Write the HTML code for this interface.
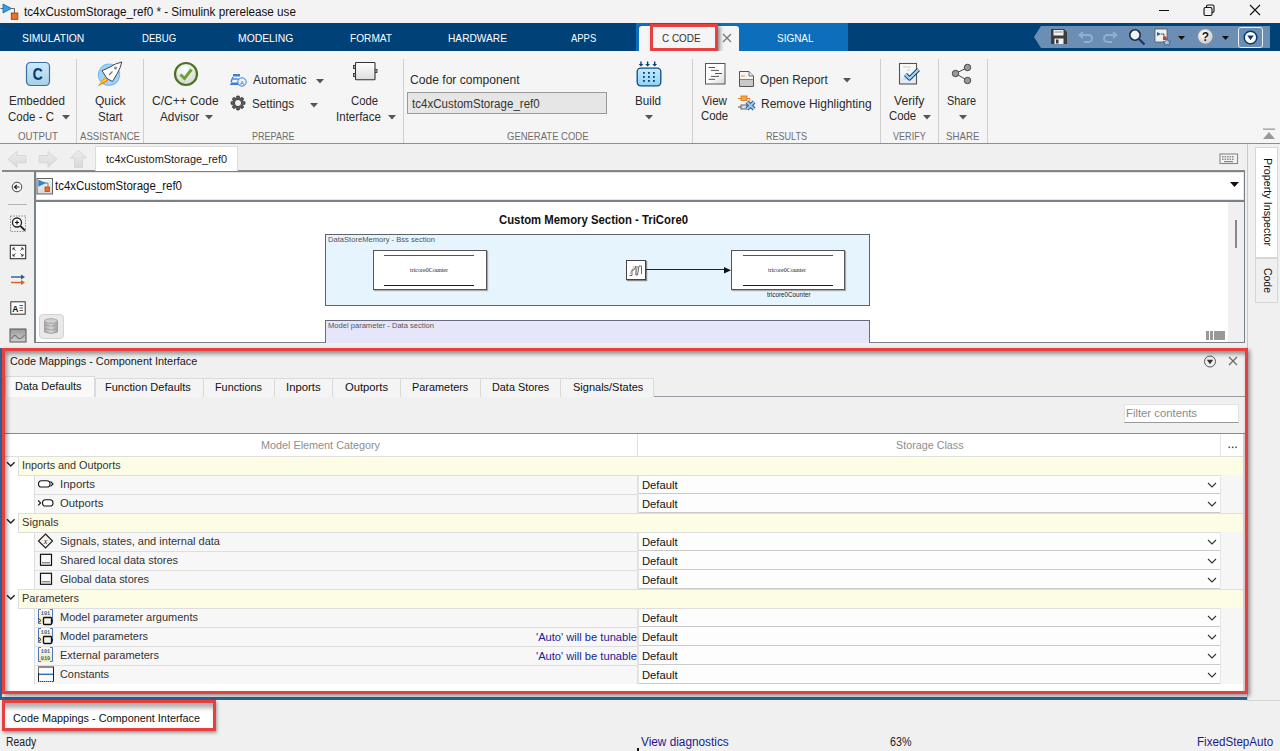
<!DOCTYPE html>
<html><head><meta charset="utf-8">
<style>
*{box-sizing:border-box;margin:0;padding:0}
html,body{width:1280px;height:751px;overflow:hidden;background:#f0f0f0;font-family:"Liberation Sans",sans-serif;color:#222;position:relative}
.a{position:absolute;display:block}
.t{position:absolute;white-space:nowrap;line-height:1}
svg.a{overflow:visible}
</style></head><body>
<div class="a" style="left:0px;top:0px;width:1280px;height:23px;background:#f3f3f3;"></div>
<svg class="a" style="left:0px;top:1px;" width="20" height="20" viewBox="0 0 20 20"><path d="M11.5 7.5H14.5V12" stroke="#555" stroke-width="0.9" fill="none"/><path d="M0.5 7.5H3" stroke="#555" stroke-width="0.9"/><path d="M3 3L11.5 7.5L3 12Z" fill="#3a9be6" stroke="#1b64a8" stroke-width="0.8"/><rect x="11.3" y="12" width="6.5" height="6.3" fill="#e8742a" stroke="#a23b10" stroke-width="0.9"/></svg>
<div class="t" style="left:24.00px;top:5.85px;font-size:12.3px;color:#111;transform:scaleX(0.9495);transform-origin:0 0;">tc4xCustomStorage_ref0 * - Simulink prerelease use</div>
<div class="a" style="left:1159px;top:10px;width:10px;height:1px;background:#111;"></div>
<svg class="a" style="left:1202px;top:3px;" width="14" height="14" viewBox="0 0 14 14"><rect x="2" y="4.5" width="8" height="8" rx="1.5" fill="none" stroke="#111" stroke-width="1.1"/><path d="M4.5 4.5V3.5Q4.5 2 6 2H10.5Q12 2 12 3.5V8Q12 9.5 10.5 9.5H10" fill="none" stroke="#111" stroke-width="1.1"/></svg>
<svg class="a" style="left:1248px;top:3px;" width="14" height="14" viewBox="0 0 14 14"><path d="M2 2L12 12M12 2L2 12" stroke="#111" stroke-width="1.1"/></svg>
<div class="a" style="left:0px;top:23px;width:1280px;height:28px;background:#004178;"></div>
<div class="a" style="left:636px;top:23px;width:212px;height:28px;background:#0d6ebc;"></div>
<svg class="a" style="left:639px;top:26px;" width="100" height="25" viewBox="0 0 100 25"><path d="M0 25V3Q0 0 3 0H97Q100 0 100 3V25Z" fill="#f5f5f5"/></svg>
<div class="t" style="left:21.80px;top:32.85px;font-size:11px;color:#ffffff;transform:scaleX(0.9380);transform-origin:0 0;">SIMULATION</div>
<div class="t" style="left:142.00px;top:32.85px;font-size:11px;color:#ffffff;transform:scaleX(0.8743);transform-origin:0 0;">DEBUG</div>
<div class="t" style="left:237.50px;top:32.85px;font-size:11px;color:#ffffff;transform:scaleX(0.9425);transform-origin:0 0;">MODELING</div>
<div class="t" style="left:350.00px;top:32.85px;font-size:11px;color:#ffffff;transform:scaleX(0.9206);transform-origin:0 0;">FORMAT</div>
<div class="t" style="left:448.00px;top:32.85px;font-size:11px;color:#ffffff;transform:scaleX(0.9253);transform-origin:0 0;">HARDWARE</div>
<div class="t" style="left:570.60px;top:32.85px;font-size:11px;color:#ffffff;transform:scaleX(0.8586);transform-origin:0 0;">APPS</div>
<div class="t" style="left:776.80px;top:32.85px;font-size:11px;color:#ffffff;transform:scaleX(0.9046);transform-origin:0 0;">SIGNAL</div>
<div class="t" style="left:661.50px;top:32.85px;font-size:11px;color:#333333;transform:scaleX(0.8999);transform-origin:0 0;">C CODE</div>
<svg class="a" style="left:722px;top:33px;" width="10" height="10" viewBox="0 0 10 10"><path d="M1 1L9 9M9 1L1 9" stroke="#777" stroke-width="1.3"/></svg>
<div class="a" style="left:650px;top:24px;width:68px;height:27px;background:none;border:3px solid #e8403f;box-shadow:2px 2px 4px rgba(0,0,0,0.45);"></div>
<svg class="a" style="left:1034px;top:26px;" width="236" height="22" viewBox="0 0 236 22"><path d="M0 11L7 0H236V22H7Z" fill="#6b8fb4"/></svg>
<svg class="a" style="left:1050px;top:28px;" width="18" height="17" viewBox="0 0 18 17"><path d="M1 1H14L17 4V16H1Z" fill="#3c3c3c"/><rect x="3.5" y="2" width="10" height="5.5" fill="#f0f0f0"/><rect x="4.5" y="3.5" width="8" height="1" fill="#888"/><rect x="4.5" y="10.5" width="9" height="5.5" fill="#f0f0f0"/><rect x="6" y="11.5" width="2.5" height="4" fill="#3c3c3c"/></svg>
<svg class="a" style="left:1078px;top:30px;" width="16" height="14" viewBox="0 0 16 14"><path d="M5 2L1.5 5L5 8M2 5H10Q14 5 14 8.5Q14 12 10 12H6" fill="none" stroke="#8fb0cf" stroke-width="1.8"/></svg>
<svg class="a" style="left:1102px;top:30px;" width="16" height="14" viewBox="0 0 16 14"><path d="M11 2L14.5 5L11 8M14 5H6Q2 5 2 8.5Q2 12 6 12H10" fill="none" stroke="#8fb0cf" stroke-width="1.8"/></svg>
<svg class="a" style="left:1128px;top:28px;" width="18" height="18" viewBox="0 0 18 18"><circle cx="7" cy="7" r="5.2" fill="#eef3f8" stroke="#1b2a3a" stroke-width="1.6"/><path d="M11 11L16.5 16.5" stroke="#1b3c66" stroke-width="2.4"/></svg>
<svg class="a" style="left:1154px;top:28px;" width="18" height="18" viewBox="0 0 18 18"><rect x="1" y="1" width="12" height="13" fill="#f0f0f0" stroke="#555" stroke-width="0.8"/><path d="M3 4L7 6L3 8Z" fill="#1b64a8"/><path d="M7 6H10V9" stroke="#333" stroke-width="0.8" fill="none"/><rect x="9" y="8.5" width="3.5" height="3.5" fill="#d43a2a"/><path d="M13 10.5L14.2 13.2L17 13.4L14.9 15.2L15.6 17.8L13 16.3L10.4 17.8L11.1 15.2L9 13.4L11.8 13.2Z" fill="#a9c8e6" stroke="#2d5a88" stroke-width="0.7"/></svg>
<svg class="a" style="left:1177.5px;top:35.5px;" width="7" height="4" viewBox="0 0 7 4"><path d="M0 0H7L3.5 4Z" fill="#111"/></svg>
<svg class="a" style="left:1197px;top:28px;" width="17" height="17" viewBox="0 0 17 17"><defs><radialGradient id="hg" cx="40%" cy="35%" r="70%"><stop offset="0" stop-color="#fff"/><stop offset="1" stop-color="#c9c9c9"/></radialGradient></defs><circle cx="8.3" cy="8.5" r="7.6" fill="url(#hg)" stroke="#888" stroke-width="0.6"/><text x="8.3" y="13" font-family="Liberation Sans" font-weight="bold" font-size="12" text-anchor="middle" fill="#1a1a1a">?</text></svg>
<svg class="a" style="left:1221.5px;top:35.5px;" width="7" height="4" viewBox="0 0 7 4"><path d="M0 0H7L3.5 4Z" fill="#111"/></svg>
<div class="a" style="left:1238px;top:26.5px;width:25px;height:21px;background:none;border:1px solid #e8eef5;border-radius:3px;"></div>
<svg class="a" style="left:1243px;top:30px;" width="15" height="15" viewBox="0 0 15 15"><circle cx="7.5" cy="7.5" r="6.3" fill="#fff" stroke="#0a3a6e" stroke-width="1.6"/><path d="M4.3 5.6H10.7L7.5 10.2Z" fill="#0a3a6e"/></svg>
<div class="a" style="left:0px;top:51px;width:1280px;height:92px;background:#f5f5f5;"></div>
<div class="a" style="left:0px;top:143px;width:1280px;height:1px;background:#8e8e8e;"></div>
<div class="a" style="left:76px;top:59px;width:1px;height:84px;background:#cfcfcf;"></div>
<div class="a" style="left:143px;top:59px;width:1px;height:84px;background:#cfcfcf;"></div>
<div class="a" style="left:403px;top:59px;width:1px;height:84px;background:#cfcfcf;"></div>
<div class="a" style="left:692px;top:59px;width:1px;height:84px;background:#cfcfcf;"></div>
<div class="a" style="left:880px;top:59px;width:1px;height:84px;background:#cfcfcf;"></div>
<div class="a" style="left:938px;top:59px;width:1px;height:84px;background:#cfcfcf;"></div>
<div class="a" style="left:987px;top:59px;width:1px;height:84px;background:#cfcfcf;"></div>
<div class="t" style="left:17.80px;top:130.65px;font-size:11px;color:#6e6e6e;transform:scaleX(0.8846);transform-origin:0 0;">OUTPUT</div>
<div class="t" style="left:79.70px;top:130.65px;font-size:11px;color:#6e6e6e;transform:scaleX(0.8712);transform-origin:0 0;">ASSISTANCE</div>
<div class="t" style="left:252.40px;top:130.65px;font-size:11px;color:#6e6e6e;transform:scaleX(0.8211);transform-origin:0 0;">PREPARE</div>
<div class="t" style="left:507.00px;top:130.65px;font-size:11px;color:#6e6e6e;transform:scaleX(0.8621);transform-origin:0 0;">GENERATE CODE</div>
<div class="t" style="left:766.00px;top:130.65px;font-size:11px;color:#6e6e6e;transform:scaleX(0.8213);transform-origin:0 0;">RESULTS</div>
<div class="t" style="left:892.70px;top:130.65px;font-size:11px;color:#6e6e6e;transform:scaleX(0.8255);transform-origin:0 0;">VERIFY</div>
<div class="t" style="left:946.00px;top:130.65px;font-size:11px;color:#6e6e6e;transform:scaleX(0.8813);transform-origin:0 0;">SHARE</div>
<svg class="a" style="left:25px;top:61px;" width="26" height="26" viewBox="0 0 26 26"><defs><linearGradient id="cg" x1="0" y1="0" x2="0" y2="1"><stop offset="0" stop-color="#cdeafa"/><stop offset="1" stop-color="#a6cfe6"/></linearGradient></defs><rect x="1.5" y="1.5" width="23" height="23" rx="4" fill="url(#cg)" stroke="#3e6f9c" stroke-width="1.2"/><path d="M16.6 10.3Q15.6 8.2 13.2 8.2Q9.3 8.2 9.3 13Q9.3 17.8 13.2 17.8Q15.7 17.8 16.7 15.6" fill="none" stroke="#0b3c6e" stroke-width="2.2"/></svg>
<div class="t" style="left:9.40px;top:94.60px;font-size:12px;color:#2b2b2b;transform:scaleX(0.9648);transform-origin:0 0;">Embedded</div>
<div class="t" style="left:8.40px;top:110.80px;font-size:12px;color:#2b2b2b;transform:scaleX(0.9580);transform-origin:0 0;">Code - C</div>
<svg class="a" style="left:61.5px;top:115px;" width="8" height="4.5" viewBox="0 0 8 4.5"><path d="M0 0H8L4.0 4.5Z" fill="#555"/></svg>
<svg class="a" style="left:95px;top:60px;" width="30" height="28" viewBox="0 0 30 28"><circle cx="14" cy="14.8" r="10.6" fill="#9fd3fa" stroke="#7cc0f6" stroke-width="1.2"/><path d="M2.5 26.5L9.5 17.5L13.5 20.5Z" fill="#ff7a00"/><path d="M4.5 24L10 18.5L12 20Z" fill="#ffe000"/><path d="M26.8 2Q20 3.5 15 7L7 10.8L12 18.5L17.5 21.5L22.5 13Q25.5 8 26.8 2Z" fill="#ffffff" stroke="#333" stroke-width="0.9" stroke-linejoin="round"/><circle cx="20.5" cy="8" r="1.5" fill="#888"/><path d="M14 15L17.5 11.5" stroke="#777" stroke-width="1.2"/></svg>
<div class="t" style="left:94.70px;top:94.60px;font-size:12px;color:#2b2b2b;transform:scaleX(0.9976);transform-origin:0 0;">Quick</div>
<div class="t" style="left:97.50px;top:110.80px;font-size:12px;color:#2b2b2b;transform:scaleX(0.9668);transform-origin:0 0;">Start</div>
<svg class="a" style="left:173px;top:61px;" width="26" height="26" viewBox="0 0 26 26"><defs><radialGradient id="kg" cx="45%" cy="30%" r="75%"><stop offset="0" stop-color="#ffffff"/><stop offset="1" stop-color="#cfcfcf"/></radialGradient></defs><circle cx="13" cy="13" r="11" fill="url(#kg)" stroke="#4a7424" stroke-width="2.2"/><path d="M7.5 13.5L11.5 17.5L18.5 8.5" fill="none" stroke="#6aa336" stroke-width="3"/></svg>
<div class="t" style="left:152.20px;top:94.70px;font-size:12px;color:#2b2b2b;transform:scaleX(0.9984);transform-origin:0 0;">C/C++ Code</div>
<div class="t" style="left:159.70px;top:111.00px;font-size:12px;color:#2b2b2b;transform:scaleX(0.9821);transform-origin:0 0;">Advisor</div>
<svg class="a" style="left:205.0px;top:115px;" width="8" height="4.5" viewBox="0 0 8 4.5"><path d="M0 0H8L4.0 4.5Z" fill="#555"/></svg>
<svg class="a" style="left:230px;top:73px;" width="17" height="14" viewBox="0 0 17 14"><rect x="3" y="1" width="7" height="2.5" fill="#3d7fd0"/><path d="M1 9.5H9V12H0Z" fill="#3d7fd0"/><path d="M3 4L1 9" stroke="#3d7fd0" stroke-width="1.5"/><rect x="2.5" y="5" width="6" height="2" fill="#6fa3e0"/><circle cx="12" cy="9" r="4.2" fill="#e8f2fc" stroke="#3d7fd0" stroke-width="1"/><text x="12" y="11.5" font-size="6" font-family="Liberation Sans" text-anchor="middle" fill="#2f6fbf">A</text></svg>
<div class="t" style="left:253.40px;top:74.00px;font-size:12px;color:#2b2b2b;transform:scaleX(1.0046);transform-origin:0 0;">Automatic</div>
<svg class="a" style="left:316.0px;top:78.5px;" width="8" height="4.5" viewBox="0 0 8 4.5"><path d="M0 0H8L4.0 4.5Z" fill="#555"/></svg>
<svg class="a" style="left:231px;top:96px;" width="14" height="14" viewBox="0 0 14 14"><path d="M12.16 5.40L14.00 5.80L14.00 8.20L12.16 8.60L11.78 9.52L12.80 11.10L11.10 12.80L9.52 11.78L8.60 12.16L8.20 14.00L5.80 14.00L5.40 12.16L4.48 11.78L2.90 12.80L1.20 11.10L2.22 9.52L1.84 8.60L0.00 8.20L0.00 5.80L1.84 5.40L2.22 4.48L1.20 2.90L2.90 1.20L4.48 2.22L5.40 1.84L5.80 0.00L8.20 0.00L8.60 1.84L9.52 2.22L11.10 1.20L12.80 2.90L11.78 4.48Z" fill="#5a5a5a" stroke="#333" stroke-width="0.7"/><circle cx="7" cy="7" r="3.6" fill="#f2f2f2" stroke="#333" stroke-width="0.9"/></svg>
<div class="t" style="left:252.40px;top:98.00px;font-size:12px;color:#2b2b2b;transform:scaleX(0.9686);transform-origin:0 0;">Settings</div>
<svg class="a" style="left:310.0px;top:102.5px;" width="8" height="4.5" viewBox="0 0 8 4.5"><path d="M0 0H8L4.0 4.5Z" fill="#555"/></svg>
<svg class="a" style="left:352px;top:61px;" width="26" height="20" viewBox="0 0 26 20"><defs><linearGradient id="ig" x1="0" y1="0" x2="0" y2="1"><stop offset="0" stop-color="#fff"/><stop offset="1" stop-color="#dcdcdc"/></linearGradient></defs><rect x="1.5" y="4.5" width="2.5" height="3" fill="#bbb" stroke="#333" stroke-width="0.9"/><rect x="1.5" y="12.5" width="2.5" height="3" fill="#bbb" stroke="#333" stroke-width="0.9"/><rect x="22.5" y="8.5" width="2.5" height="3" fill="#bbb" stroke="#333" stroke-width="0.9"/><rect x="3.5" y="1.5" width="19.5" height="17.2" rx="0.8" fill="url(#ig)" stroke="#333" stroke-width="1.1"/></svg>
<div class="t" style="left:351.00px;top:94.70px;font-size:12px;color:#2b2b2b;transform:scaleX(0.9411);transform-origin:0 0;">Code</div>
<div class="t" style="left:336.00px;top:111.00px;font-size:12px;color:#2b2b2b;transform:scaleX(0.9637);transform-origin:0 0;">Interface</div>
<svg class="a" style="left:388.0px;top:115px;" width="8" height="4.5" viewBox="0 0 8 4.5"><path d="M0 0H8L4.0 4.5Z" fill="#555"/></svg>
<div class="t" style="left:410.00px;top:73.70px;font-size:12px;color:#2b2b2b;transform:scaleX(1.0080);transform-origin:0 0;">Code for component</div>
<div class="a" style="left:407px;top:92px;width:200px;height:22px;background:#e6e6e6;border:1px solid #9a9a9a;"></div>
<div class="t" style="left:412.30px;top:97.90px;font-size:12px;color:#333;transform:scaleX(0.9621);transform-origin:0 0;">tc4xCustomStorage_ref0</div>
<svg class="a" style="left:636px;top:61px;" width="26" height="26" viewBox="0 0 26 26"><defs><linearGradient id="bg1" x1="0" y1="0" x2="0" y2="1"><stop offset="0" stop-color="#c4ecfd"/><stop offset="1" stop-color="#8ed3f6"/></linearGradient></defs><path d="M5 0.5V4" stroke="#0b3f73" stroke-width="1.4"/><path d="M2.6 3H7.4L5 5.5Z" fill="#0b3f73"/><path d="M11.6 0.5V4" stroke="#0b3f73" stroke-width="1.4"/><path d="M9.2 3H14.0L11.6 5.5Z" fill="#0b3f73"/><path d="M18.7 0.5V4" stroke="#0b3f73" stroke-width="1.4"/><path d="M16.3 3H21.099999999999998L18.7 5.5Z" fill="#0b3f73"/><rect x="1.2" y="7.2" width="23.6" height="17.6" rx="3.5" fill="url(#bg1)" stroke="#0b4c82" stroke-width="1.3"/><rect x="7" y="11" width="1.8" height="1.8" fill="#0b3f73"/><rect x="7" y="15" width="1.8" height="1.8" fill="#0b3f73"/><rect x="7" y="19" width="1.8" height="1.8" fill="#0b3f73"/><rect x="12" y="11" width="1.8" height="1.8" fill="#0b3f73"/><rect x="12" y="15" width="1.8" height="1.8" fill="#0b3f73"/><rect x="12" y="19" width="1.8" height="1.8" fill="#0b3f73"/><rect x="17" y="11" width="1.8" height="1.8" fill="#0b3f73"/><rect x="17" y="15" width="1.8" height="1.8" fill="#0b3f73"/><rect x="17" y="19" width="1.8" height="1.8" fill="#0b3f73"/></svg>
<div class="t" style="left:635.00px;top:94.80px;font-size:12px;color:#2b2b2b;transform:scaleX(0.9743);transform-origin:0 0;">Build</div>
<svg class="a" style="left:645.0px;top:115px;" width="8" height="4.5" viewBox="0 0 8 4.5"><path d="M0 0H8L4.0 4.5Z" fill="#555"/></svg>
<svg class="a" style="left:705px;top:63px;" width="21" height="22" viewBox="0 0 21 22"><defs><linearGradient id="vg" x1="0" y1="0" x2="1" y2="1"><stop offset="0.5" stop-color="#fff"/><stop offset="1" stop-color="#d8d8d8"/></linearGradient></defs><rect x="0.5" y="0.5" width="19.5" height="20.5" fill="url(#vg)" stroke="#555" stroke-width="1"/><path d="M3.5 4.5H10" stroke="#444" stroke-width="0.9"/><path d="M6 7.4H14" stroke="#444" stroke-width="0.9"/><path d="M10 10.5H17" stroke="#444" stroke-width="0.9"/><path d="M6 13.4H14" stroke="#444" stroke-width="0.9"/><path d="M3.5 16.3H10" stroke="#444" stroke-width="0.9"/></svg>
<div class="t" style="left:702.00px;top:94.80px;font-size:12px;color:#2b2b2b;transform:scaleX(0.9692);transform-origin:0 0;">View</div>
<div class="t" style="left:701.00px;top:110.10px;font-size:12px;color:#2b2b2b;transform:scaleX(0.9481);transform-origin:0 0;">Code</div>
<svg class="a" style="left:738px;top:70px;" width="17" height="18" viewBox="0 0 17 18"><path d="M1.5 1.5H11L15.5 6V16.5H1.5Z" fill="#f4f4f4" stroke="#555" stroke-width="1"/><path d="M11 1.5V6H15.5" fill="#dfe6ef" stroke="#555" stroke-width="0.8"/><rect x="2" y="10" width="13" height="6" fill="#c9c9c9"/><path d="M1.5 9.5H15.5" stroke="#666" stroke-width="0.8"/><path d="M3 6H7" stroke="#f0a040" stroke-width="1.2"/></svg>
<div class="t" style="left:760.30px;top:73.80px;font-size:12px;color:#2b2b2b;transform:scaleX(0.9853);transform-origin:0 0;">Open Report</div>
<svg class="a" style="left:843.0px;top:78px;" width="8" height="4.5" viewBox="0 0 8 4.5"><path d="M0 0H8L4.0 4.5Z" fill="#555"/></svg>
<svg class="a" style="left:738px;top:95px;" width="18" height="17" viewBox="0 0 18 17"><rect x="3" y="1" width="6" height="4.5" fill="#f3a64a" stroke="#e07b1a" stroke-width="0.9"/><path d="M0 3.5H3M9 3.5H12V6" stroke="#e0701a" stroke-width="0.9" fill="none"/><rect x="3" y="10" width="6" height="4" fill="#ddd" stroke="#555" stroke-width="0.9"/><path d="M0 12H3" stroke="#444" stroke-width="0.9"/><path d="M9 7L16 14M16 7L9 14" stroke="#1f5f9a" stroke-width="4"/><path d="M9 7L16 14M16 7L9 14" stroke="#9cc8ef" stroke-width="2"/></svg>
<div class="t" style="left:761.00px;top:97.80px;font-size:12px;color:#2b2b2b;transform:scaleX(0.9988);transform-origin:0 0;">Remove Highlighting</div>
<svg class="a" style="left:898px;top:62px;" width="25" height="23" viewBox="0 0 25 23"><defs><linearGradient id="rg" x1="0" y1="0" x2="0" y2="1"><stop offset="0" stop-color="#fff"/><stop offset="1" stop-color="#dde8f3"/></linearGradient></defs><rect x="1.5" y="1.5" width="17" height="20.5" fill="url(#rg)" stroke="#555" stroke-width="1.1"/><path d="M5 5H13M9 8H12M5 17H8" stroke="#bbb" stroke-width="0.8"/><path d="M7.5 12.5L11.5 16.5L20.5 7.5" fill="none" stroke="#0d4276" stroke-width="4.2" stroke-linejoin="round"/><path d="M7.5 12.5L11.5 16.5L20.5 7.5" fill="none" stroke="#a9d4f2" stroke-width="2.2" stroke-linejoin="round"/></svg>
<div class="t" style="left:894.00px;top:94.80px;font-size:12px;color:#2b2b2b;transform:scaleX(1.0129);transform-origin:0 0;">Verify</div>
<div class="t" style="left:889.00px;top:110.10px;font-size:12px;color:#2b2b2b;transform:scaleX(0.9481);transform-origin:0 0;">Code</div>
<svg class="a" style="left:923.0px;top:115px;" width="8" height="4.5" viewBox="0 0 8 4.5"><path d="M0 0H8L4.0 4.5Z" fill="#555"/></svg>
<svg class="a" style="left:950px;top:62px;" width="22" height="24" viewBox="0 0 22 24"><path d="M17.5 5.5L5.5 11.5L17.5 18.5" stroke="#444" stroke-width="1" fill="none"/><circle cx="17.5" cy="5.5" r="3.2" fill="#9a9a9a" stroke="#444" stroke-width="1"/><circle cx="5.5" cy="11.5" r="3.2" fill="#9a9a9a" stroke="#444" stroke-width="1"/><circle cx="17.5" cy="18.5" r="3.2" fill="#9a9a9a" stroke="#444" stroke-width="1"/></svg>
<div class="t" style="left:947.30px;top:94.80px;font-size:12px;color:#2b2b2b;transform:scaleX(0.9087);transform-origin:0 0;">Share</div>
<svg class="a" style="left:958.5px;top:114.5px;" width="8" height="4.5" viewBox="0 0 8 4.5"><path d="M0 0H8L4.0 4.5Z" fill="#555"/></svg>
<svg class="a" style="left:1262px;top:128px;" width="14" height="12" viewBox="0 0 14 12"><rect x="1" y="0.5" width="12" height="1.3" fill="#999"/><path d="M1 11L7 4L13 11Z" fill="#999"/></svg>
<div class="a" style="left:0px;top:144px;width:1280px;height:203px;background:#f0f0f0;"></div>
<svg class="a" style="left:7px;top:150px;" width="20" height="19" viewBox="0 0 20 19"><defs><linearGradient id="ng" x1="0" y1="0" x2="0" y2="1"><stop offset="0" stop-color="#ececec"/><stop offset="1" stop-color="#d9d9d9"/></linearGradient></defs><path d="M1 9.3L10 1.5V5.5H19V12.8H10V17.3Z" fill="url(#ng)" stroke="#d2d2d2" stroke-width="0.8"/></svg>
<svg class="a" style="left:38px;top:150px;" width="20" height="19" viewBox="0 0 20 19"><defs><linearGradient id="ng" x1="0" y1="0" x2="0" y2="1"><stop offset="0" stop-color="#ececec"/><stop offset="1" stop-color="#d9d9d9"/></linearGradient></defs><path d="M19 9.3L10 1.5V5.5H1V12.8H10V17.3Z" fill="url(#ng)" stroke="#d2d2d2" stroke-width="0.8"/></svg>
<svg class="a" style="left:70px;top:149px;" width="18" height="20" viewBox="0 0 18 20"><defs><linearGradient id="ng" x1="0" y1="0" x2="0" y2="1"><stop offset="0" stop-color="#ececec"/><stop offset="1" stop-color="#d9d9d9"/></linearGradient></defs><path d="M8.5 1L16.5 9H12.5V18.5H4.5V9H0.5Z" fill="url(#ng)" stroke="#d2d2d2" stroke-width="0.8"/></svg>
<div class="a" style="left:2px;top:170px;width:1243px;height:1.5px;background:#8a8a8a;"></div>
<div class="a" style="left:95px;top:146px;width:143px;height:25px;background:#ffffff;border:1px solid #dcdcdc;border-bottom:none;"></div>
<div class="t" style="left:106.00px;top:154.05px;font-size:11px;color:#1a1a1a;transform:scaleX(0.9945);transform-origin:0 0;">tc4xCustomStorage_ref0</div>
<svg class="a" style="left:1219px;top:153px;" width="20" height="12" viewBox="0 0 20 12"><rect x="1" y="1" width="17.5" height="9.5" fill="#f4f4f4" stroke="#888" stroke-width="1.1"/><rect x="3" y="3" width="1.6" height="1.4" fill="#888"/><rect x="3" y="5.5" width="1.6" height="1.4" fill="#888"/><rect x="5.5" y="3" width="1.6" height="1.4" fill="#888"/><rect x="5.5" y="5.5" width="1.6" height="1.4" fill="#888"/><rect x="8" y="3" width="1.6" height="1.4" fill="#888"/><rect x="8" y="5.5" width="1.6" height="1.4" fill="#888"/><rect x="10.5" y="3" width="1.6" height="1.4" fill="#888"/><rect x="10.5" y="5.5" width="1.6" height="1.4" fill="#888"/><rect x="13" y="3" width="1.6" height="1.4" fill="#888"/><rect x="13" y="5.5" width="1.6" height="1.4" fill="#888"/><rect x="5" y="8" width="9" height="1.2" fill="#888"/></svg>
<div class="a" style="left:1247px;top:144px;width:1px;height:557px;background:#c8c8c8;"></div>
<div class="a" style="left:1255px;top:147px;width:23px;height:111px;background:#ffffff;border:1px solid #d6d6d6;"></div>
<div class="a" style="left:1255px;top:258px;width:23px;height:45px;background:#f0f0f0;border:1px solid #d6d6d6;"></div>
<div class="t" style="left:1272.50px;top:158.05px;font-size:11px;color:#111;transform:rotate(90deg) scaleX(0.9791);transform-origin:0 0;transform-origin:0 0;">Property Inspector</div>
<div class="t" style="left:1272.50px;top:268.05px;font-size:11px;color:#111;transform:rotate(90deg) scaleX(0.9507);transform-origin:0 0;">Code</div>
<svg class="a" style="left:10px;top:181px;" width="14" height="12" viewBox="0 0 14 12"><circle cx="7" cy="6" r="4.8" fill="#f8f8f8" stroke="#444" stroke-width="1"/><path d="M9.5 6H5M6.8 4L4.5 6L6.8 8" stroke="#222" stroke-width="1.2" fill="none"/></svg>
<div class="a" style="left:8px;top:204px;width:19px;height:1px;background:#b5b5b5;"></div>
<svg class="a" style="left:9px;top:215px;" width="18" height="18" viewBox="0 0 18 18"><rect x="1.5" y="1" width="15" height="15.5" fill="none" stroke="#777" stroke-width="0.8" stroke-dasharray="1.5 1.2"/><circle cx="8" cy="7.5" r="4.5" fill="#fff" stroke="#222" stroke-width="1.3"/><path d="M6 7.5H10M8 5.5V9.5" stroke="#111" stroke-width="1.2"/><path d="M11.3 10.8L16 15.5" stroke="#222" stroke-width="1.8"/></svg>
<svg class="a" style="left:9px;top:244px;" width="18" height="16" viewBox="0 0 18 16"><rect x="1.3" y="1.3" width="15.4" height="13.4" fill="#fafafa" stroke="#333" stroke-width="1.1"/><path d="M4 4L6.5 6.5M4 4H6M4 4V6M14 4L11.5 6.5M14 4H12M14 4V6M4 12L6.5 9.5M4 12H6M4 12V10M14 12L11.5 9.5M14 12H12M14 12V10" stroke="#333" stroke-width="0.9" fill="none"/></svg>
<svg class="a" style="left:10px;top:274px;" width="16" height="12" viewBox="0 0 16 12"><path d="M1 3H13" stroke="#2d5a8a" stroke-width="1.4"/><path d="M11 0.5L15 3L11 5.5Z" fill="#2d5a8a"/><path d="M1 8.5H13" stroke="#d9601f" stroke-width="1.4"/><path d="M11 6L15 8.5L11 11Z" fill="#d9601f"/></svg>
<svg class="a" style="left:10px;top:301px;" width="16" height="14" viewBox="0 0 16 14"><rect x="0.8" y="0.8" width="14.4" height="12.4" fill="#fafafa" stroke="#333" stroke-width="1"/><text x="2.3" y="10.5" font-family="Liberation Sans" font-weight="bold" font-size="8.5" fill="#111">A</text><path d="M9.5 4.5H13M9.5 7H13M9.5 9.5H13" stroke="#333" stroke-width="0.8"/></svg>
<svg class="a" style="left:9px;top:328px;" width="18" height="15" viewBox="0 0 18 15"><defs><linearGradient id="pg" x1="0" y1="0" x2="0" y2="1"><stop offset="0" stop-color="#9a9a9a"/><stop offset="1" stop-color="#d0d0d0"/></linearGradient></defs><rect x="1" y="1" width="16" height="13" fill="url(#pg)" stroke="#555" stroke-width="1"/><path d="M2.5 11Q5 5 8 9Q11 13 15.5 7" stroke="#777" stroke-width="1.2" fill="none"/></svg>
<div class="a" style="left:34px;top:171px;width:1211px;height:172px;background:#ffffff;"></div>
<div class="a" style="left:34px;top:171px;width:1.5px;height:172px;background:#7b8189;"></div>
<div class="a" style="left:1243.5px;top:171px;width:1.5px;height:172px;background:#7b8189;"></div>
<div class="a" style="left:34px;top:170.5px;width:1211px;height:1.5px;background:#7b8189;"></div>
<div class="a" style="left:34px;top:200px;width:1211px;height:1.5px;background:#7b8189;"></div>
<div class="a" style="left:35.5px;top:172px;width:1208px;height:28px;background:none;border:1px solid #e6e6e6;"></div>
<div class="a" style="left:34px;top:342px;width:1211px;height:1px;background:#7b8189;"></div>
<svg class="a" style="left:36px;top:178px;" width="18" height="17" viewBox="0 0 18 17"><defs><linearGradient id="mg" x1="0" y1="0" x2="0" y2="1"><stop offset="0" stop-color="#f6f6f6"/><stop offset="1" stop-color="#d6d6d6"/></linearGradient></defs><rect x="1" y="0.5" width="15.5" height="15.5" fill="url(#mg)" stroke="#555" stroke-width="0.9"/><path d="M9 5H12V9" stroke="#444" stroke-width="0.6" fill="none"/><path d="M2.6 2.2L9.5 5L2.6 8.2Z" fill="#2a8bd8" stroke="#1b64a8" stroke-width="0.5"/><rect x="9" y="9" width="4.5" height="4.5" fill="#e6702a" stroke="#9d3a12" stroke-width="0.7"/></svg>
<div class="t" style="left:55.20px;top:179.60px;font-size:12px;color:#111;transform:scaleX(0.9568);transform-origin:0 0;">tc4xCustomStorage_ref0</div>
<svg class="a" style="left:1230.0px;top:182px;" width="9" height="5" viewBox="0 0 9 5"><path d="M0 0H9L4.5 5Z" fill="#111"/></svg>
<div class="a" style="left:1228px;top:201.5px;width:15.5px;height:140.5px;background:#f0f0f0;"></div>
<div class="a" style="left:1235px;top:220px;width:1.5px;height:28px;background:#888;"></div>
<div class="a" style="left:1206px;top:331px;width:3px;height:9px;background:#999;"></div>
<div class="a" style="left:1210px;top:331px;width:3px;height:9px;background:#999;"></div>
<div class="a" style="left:1214px;top:331px;width:11px;height:9px;background:#999;"></div>
<div class="a" style="left:39px;top:314px;width:25px;height:25px;background:#e9e9e9;border:1px solid #d3d3d3;border-radius:4px;"></div>
<svg class="a" style="left:43px;top:318px;" width="16" height="17" viewBox="0 0 16 17"><defs><linearGradient id="dg" x1="0" y1="0" x2="1" y2="0"><stop offset="0" stop-color="#a8a8a8"/><stop offset="0.5" stop-color="#d8d8d8"/><stop offset="1" stop-color="#a0a0a0"/></linearGradient></defs><path d="M1.5 3V14Q8 17 14.5 14V3" fill="url(#dg)" stroke="#999" stroke-width="0.8"/><ellipse cx="8" cy="3" rx="6.5" ry="2.3" fill="#d0d0d0" stroke="#999" stroke-width="0.8"/><path d="M1.5 6.8Q8 9.8 14.5 6.8M1.5 10.5Q8 13.5 14.5 10.5" stroke="#999" stroke-width="0.8" fill="none"/></svg>
<div class="t" style="left:499.00px;top:214.10px;font-size:12px;color:#111;font-weight:bold;transform:scaleX(0.9448);transform-origin:0 0;">Custom Memory Section - TriCore0</div>
<div class="a" style="left:324.5px;top:233.5px;width:545px;height:72px;background:#e6f4fd;border:1px solid #5f6368;"></div>
<div class="t" style="left:328.00px;top:236.40px;font-size:8px;color:#555;transform:scaleX(0.9475);transform-origin:0 0;">DataStoreMemory - Bss section</div>
<div class="a" style="left:324.5px;top:319.5px;width:545px;height:30px;background:#e6e6fb;border:1px solid #6a6a80;"></div>
<div class="t" style="left:328.00px;top:322.20px;font-size:8px;color:#555;transform:scaleX(0.9460);transform-origin:0 0;">Model parameter - Data section</div>
<div class="a" style="left:372.5px;top:250px;width:114px;height:39.5px;background:#ffffff;border:1px solid #555;box-shadow:1px 1px 1px #aaa;"></div>
<div class="a" style="left:384.0px;top:254.5px;width:90px;height:1.2px;background:#555;"></div>
<div class="a" style="left:384.0px;top:285px;width:90px;height:1.3px;background:#222;"></div>
<div class="a" style="left:731px;top:250px;width:114px;height:39.5px;background:#ffffff;border:1px solid #555;box-shadow:1px 1px 1px #aaa;"></div>
<div class="a" style="left:742.5px;top:254.5px;width:90px;height:1.2px;background:#555;"></div>
<div class="a" style="left:742.5px;top:285px;width:90px;height:1.3px;background:#222;"></div>
<div class="t" style="left:409.50px;top:267.48px;font-size:6.5px;color:#222;font-family:'Liberation Serif',serif;transform:scaleX(0.9234);transform-origin:0 0;">tricore0Counter</div>
<div class="t" style="left:768.00px;top:267.48px;font-size:6.5px;color:#222;font-family:'Liberation Serif',serif;transform:scaleX(0.9234);transform-origin:0 0;">tricore0Counter</div>
<div class="t" style="left:766.70px;top:291.05px;font-size:7px;color:#222;transform:scaleX(0.9016);transform-origin:0 0;">tricore0Counter</div>
<div class="a" style="left:626px;top:260px;width:20px;height:19.5px;background:#ffffff;border:1px solid #444;box-shadow:1px 1px 1px #888;"></div>
<svg class="a" style="left:626px;top:260px;" width="20" height="20" viewBox="0 0 20 20"><path d="M3.5 15.5H6V10H8L10 6V15H11.5L13 6H15.5V14" stroke="#444" stroke-width="0.8" fill="none"/><path d="M4 14L8 6M9 15L12 6" stroke="#777" stroke-width="0.5"/></svg>
<div class="a" style="left:646px;top:269.3px;width:81px;height:1px;background:#222;"></div>
<svg class="a" style="left:724px;top:266.5px;" width="8" height="7" viewBox="0 0 8 7"><path d="M0 0L7 3.3L0 6.6Z" fill="#111"/></svg>
<div class="a" style="left:35.5px;top:343px;width:1209px;height:4px;background:#f0f0f0;"></div>
<div class="a" style="left:0px;top:347px;width:1247px;height:354px;background:#f0f0f0;"></div>
<div class="a" style="left:0px;top:348px;width:2px;height:352px;background:#2f6394;"></div>
<div class="a" style="left:0px;top:696.5px;width:1247px;height:3.5px;background:#2f6394;"></div>
<div class="a" style="left:1247px;top:700px;width:33px;height:1px;background:#d4d4d4;"></div>
<div class="t" style="left:10.30px;top:355.85px;font-size:11px;color:#1a1a1a;transform:scaleX(0.9881);transform-origin:0 0;">Code Mappings - Component Interface</div>
<svg class="a" style="left:1203px;top:355px;" width="14" height="13" viewBox="0 0 14 13"><circle cx="7" cy="6.5" r="5.5" fill="none" stroke="#555" stroke-width="1"/><path d="M3.8 4.8H10.2L7 9.2Z" fill="#333"/></svg>
<svg class="a" style="left:1228px;top:356px;" width="10" height="10" viewBox="0 0 10 10"><path d="M1 1L9 9M9 1L1 9" stroke="#6a6a6a" stroke-width="1.2"/></svg>
<div class="a" style="left:5px;top:396px;width:1240px;height:1px;background:#9a9ea4;"></div>
<div class="a" style="left:5px;top:376px;width:89.7px;height:21px;background:#f9f9f9;border:1px solid #dadada;border-bottom:none;"></div>
<div class="t" style="left:14.50px;top:381.45px;font-size:11px;color:#111;transform:scaleX(0.9978);transform-origin:0 0;">Data Defaults</div>
<div class="a" style="left:94.7px;top:378px;width:108.99999999999999px;height:19px;background:#f4f4f4;border:1px solid #dadada;border-bottom:none;"></div>
<div class="t" style="left:105.30px;top:382.15px;font-size:11px;color:#111;transform:scaleX(1.0023);transform-origin:0 0;">Function Defaults</div>
<div class="a" style="left:202.7px;top:378px;width:72.0px;height:19px;background:#f4f4f4;border:1px solid #dadada;border-bottom:none;"></div>
<div class="t" style="left:215.00px;top:382.15px;font-size:11px;color:#111;transform:scaleX(0.9855);transform-origin:0 0;">Functions</div>
<div class="a" style="left:273.7px;top:378px;width:59.60000000000002px;height:19px;background:#f4f4f4;border:1px solid #dadada;border-bottom:none;"></div>
<div class="t" style="left:286.00px;top:382.15px;font-size:11px;color:#111;transform:scaleX(1.0289);transform-origin:0 0;">Inports</div>
<div class="a" style="left:332.3px;top:378px;width:68.59999999999997px;height:19px;background:#f4f4f4;border:1px solid #dadada;border-bottom:none;"></div>
<div class="t" style="left:344.80px;top:382.15px;font-size:11px;color:#111;transform:scaleX(1.0193);transform-origin:0 0;">Outports</div>
<div class="a" style="left:399.9px;top:378px;width:80.70000000000005px;height:19px;background:#f4f4f4;border:1px solid #dadada;border-bottom:none;"></div>
<div class="t" style="left:411.60px;top:382.15px;font-size:11px;color:#111;transform:scaleX(0.9902);transform-origin:0 0;">Parameters</div>
<div class="a" style="left:479.6px;top:378px;width:81.39999999999998px;height:19px;background:#f4f4f4;border:1px solid #dadada;border-bottom:none;"></div>
<div class="t" style="left:491.70px;top:382.15px;font-size:11px;color:#111;transform:scaleX(0.9865);transform-origin:0 0;">Data Stores</div>
<div class="a" style="left:560px;top:378px;width:93.70000000000005px;height:19px;background:#f4f4f4;border:1px solid #dadada;border-bottom:none;"></div>
<div class="t" style="left:572.60px;top:382.15px;font-size:11px;color:#111;transform:scaleX(0.9997);transform-origin:0 0;">Signals/States</div>
<div class="a" style="left:1124px;top:403.5px;width:114.5px;height:19.5px;background:#ffffff;border:1px solid #e2e2e2;border-bottom:1.5px solid #9a9a9a;"></div>
<div class="t" style="left:1126.00px;top:408.15px;font-size:11px;color:#8a8a8a;transform:scaleX(1.0277);transform-origin:0 0;">Filter contents</div>
<div class="a" style="left:5px;top:432.5px;width:1240px;height:1.5px;background:#858b94;"></div>
<div class="a" style="left:5px;top:434px;width:1238px;height:257px;background:#ffffff;"></div>
<div class="a" style="left:1243px;top:434px;width:2px;height:257px;background:#d8d8d8;"></div>
<div class="a" style="left:637px;top:434px;width:1px;height:22px;background:#e0e0e0;"></div>
<div class="a" style="left:1220px;top:434px;width:1px;height:22px;background:#e6e6e6;"></div>
<div class="a" style="left:5px;top:455.5px;width:1238px;height:1px;background:#e0e0e0;"></div>
<div class="t" style="left:261.00px;top:439.95px;font-size:11px;color:#8e8e8e;transform:scaleX(0.9830);transform-origin:0 0;">Model Element Category</div>
<div class="t" style="left:895.50px;top:439.95px;font-size:11px;color:#8e8e8e;transform:scaleX(0.9770);transform-origin:0 0;">Storage Class</div>
<svg class="a" style="left:1228px;top:446px;" width="10" height="3" viewBox="0 0 10 3"><rect x="0.5" y="0.5" width="1.6" height="1.6" fill="#555"/><rect x="3.9" y="0.5" width="1.6" height="1.6" fill="#555"/><rect x="7.3" y="0.5" width="1.6" height="1.6" fill="#555"/></svg>
<div class="a" style="left:18px;top:456px;width:1225px;height:19.5px;background:#fdfde6;border:1px solid #dedede;border-right:none;"></div>
<svg class="a" style="left:6px;top:461px;" width="10" height="7" viewBox="0 0 10 7"><path d="M1 1.2L4.8 5L8.6 1.2" fill="none" stroke="#222" stroke-width="1.4"/></svg>
<div class="t" style="left:22.40px;top:459.55px;font-size:11px;color:#333;transform:scaleX(0.9833);transform-origin:0 0;">Inports and Outports</div>
<div class="a" style="left:34px;top:475px;width:603.5px;height:19.5px;background:#f7f7f7;border:1px solid #dedede;border-right:none;"></div>
<div class="a" style="left:637px;top:475px;width:2px;height:19px;background:#e2e2e2;"></div>
<div class="a" style="left:639px;top:476px;width:581px;height:18px;background:#fdfdfd;"></div>
<div class="a" style="left:639px;top:492.5px;width:581px;height:1.5px;background:#cacaca;"></div>
<div class="a" style="left:1220px;top:475px;width:23px;height:19.5px;background:#f6f6f6;border:none;border-bottom:1px solid #e2e2e2;border-left:1px solid #e6e6e6;"></div>
<div class="t" style="left:642.40px;top:480.05px;font-size:11px;color:#111;transform:scaleX(1.0185);transform-origin:0 0;">Default</div>
<svg class="a" style="left:1207px;top:482px;" width="10" height="6" viewBox="0 0 10 6"><path d="M1 1L5 5L9 1" fill="none" stroke="#333" stroke-width="1.1"/></svg>
<div class="t" style="left:60.00px;top:478.75px;font-size:11px;color:#333;transform:scaleX(1.0408);transform-origin:0 0;">Inports</div>
<svg class="a" style="left:37px;top:475px;" width="18" height="19" viewBox="0 0 18 19"><rect x="1.5" y="5.8" width="11.5" height="6.2" rx="3.1" fill="#fff" stroke="#111" stroke-width="1.1"/><path d="M13.5 6.5L16 8.9L13.5 11.3" fill="none" stroke="#111" stroke-width="1.1"/></svg>
<div class="a" style="left:34px;top:494px;width:603.5px;height:19.5px;background:#f7f7f7;border:1px solid #dedede;border-right:none;"></div>
<div class="a" style="left:637px;top:494px;width:2px;height:19px;background:#e2e2e2;"></div>
<div class="a" style="left:639px;top:495px;width:581px;height:18px;background:#fdfdfd;"></div>
<div class="a" style="left:639px;top:511.5px;width:581px;height:1.5px;background:#cacaca;"></div>
<div class="a" style="left:1220px;top:494px;width:23px;height:19.5px;background:#f6f6f6;border:none;border-bottom:1px solid #e2e2e2;border-left:1px solid #e6e6e6;"></div>
<div class="t" style="left:642.40px;top:499.05px;font-size:11px;color:#111;transform:scaleX(1.0185);transform-origin:0 0;">Default</div>
<svg class="a" style="left:1207px;top:501px;" width="10" height="6" viewBox="0 0 10 6"><path d="M1 1L5 5L9 1" fill="none" stroke="#333" stroke-width="1.1"/></svg>
<div class="t" style="left:60.00px;top:497.75px;font-size:11px;color:#333;transform:scaleX(1.0264);transform-origin:0 0;">Outports</div>
<svg class="a" style="left:37px;top:494px;" width="18" height="19" viewBox="0 0 18 19"><rect x="5.5" y="5.8" width="10.5" height="6.2" rx="3.1" fill="#fff" stroke="#111" stroke-width="1.1"/><path d="M1.2 6.5L3.6 8.9L1.2 11.3" fill="none" stroke="#111" stroke-width="1.1"/></svg>
<div class="a" style="left:18px;top:513px;width:1225px;height:19.5px;background:#fdfde6;border:1px solid #dedede;border-right:none;"></div>
<svg class="a" style="left:6px;top:518px;" width="10" height="7" viewBox="0 0 10 7"><path d="M1 1.2L4.8 5L8.6 1.2" fill="none" stroke="#222" stroke-width="1.4"/></svg>
<div class="t" style="left:22.40px;top:516.55px;font-size:11px;color:#333;transform:scaleX(1.0144);transform-origin:0 0;">Signals</div>
<div class="a" style="left:34px;top:532px;width:603.5px;height:19.5px;background:#f7f7f7;border:1px solid #dedede;border-right:none;"></div>
<div class="a" style="left:637px;top:532px;width:2px;height:19px;background:#e2e2e2;"></div>
<div class="a" style="left:639px;top:533px;width:581px;height:18px;background:#fdfdfd;"></div>
<div class="a" style="left:639px;top:549.5px;width:581px;height:1.5px;background:#cacaca;"></div>
<div class="a" style="left:1220px;top:532px;width:23px;height:19.5px;background:#f6f6f6;border:none;border-bottom:1px solid #e2e2e2;border-left:1px solid #e6e6e6;"></div>
<div class="t" style="left:642.40px;top:537.05px;font-size:11px;color:#111;transform:scaleX(1.0185);transform-origin:0 0;">Default</div>
<svg class="a" style="left:1207px;top:539px;" width="10" height="6" viewBox="0 0 10 6"><path d="M1 1L5 5L9 1" fill="none" stroke="#333" stroke-width="1.1"/></svg>
<div class="t" style="left:60.00px;top:535.75px;font-size:11px;color:#333;transform:scaleX(1.0025);transform-origin:0 0;">Signals, states, and internal data</div>
<svg class="a" style="left:37px;top:532px;" width="18" height="19" viewBox="0 0 18 19"><path d="M8.5 2L15.5 9L8.5 16L1.5 9Z" fill="#f4f4f4" stroke="#222" stroke-width="1.2"/><text x="8.5" y="11.6" font-family="Liberation Serif" font-style="italic" font-size="8" text-anchor="middle" fill="#111">x</text></svg>
<div class="a" style="left:34px;top:551px;width:603.5px;height:19.5px;background:#f7f7f7;border:1px solid #dedede;border-right:none;"></div>
<div class="a" style="left:637px;top:551px;width:2px;height:19px;background:#e2e2e2;"></div>
<div class="a" style="left:639px;top:552px;width:581px;height:18px;background:#fdfdfd;"></div>
<div class="a" style="left:639px;top:568.5px;width:581px;height:1.5px;background:#cacaca;"></div>
<div class="a" style="left:1220px;top:551px;width:23px;height:19.5px;background:#f6f6f6;border:none;border-bottom:1px solid #e2e2e2;border-left:1px solid #e6e6e6;"></div>
<div class="t" style="left:642.40px;top:556.05px;font-size:11px;color:#111;transform:scaleX(1.0185);transform-origin:0 0;">Default</div>
<svg class="a" style="left:1207px;top:558px;" width="10" height="6" viewBox="0 0 10 6"><path d="M1 1L5 5L9 1" fill="none" stroke="#333" stroke-width="1.1"/></svg>
<div class="t" style="left:60.00px;top:554.75px;font-size:11px;color:#333;transform:scaleX(0.9947);transform-origin:0 0;">Shared local data stores</div>
<svg class="a" style="left:37px;top:551px;" width="18" height="19" viewBox="0 0 18 19"><rect x="3.5" y="3.3" width="11" height="11" fill="#fafafa" stroke="#111" stroke-width="1.2"/><path d="M5 11.8H13" stroke="#333" stroke-width="0.8"/></svg>
<div class="a" style="left:34px;top:570px;width:603.5px;height:19.5px;background:#f7f7f7;border:1px solid #dedede;border-right:none;"></div>
<div class="a" style="left:637px;top:570px;width:2px;height:19px;background:#e2e2e2;"></div>
<div class="a" style="left:639px;top:571px;width:581px;height:18px;background:#fdfdfd;"></div>
<div class="a" style="left:639px;top:587.5px;width:581px;height:1.5px;background:#cacaca;"></div>
<div class="a" style="left:1220px;top:570px;width:23px;height:19.5px;background:#f6f6f6;border:none;border-bottom:1px solid #e2e2e2;border-left:1px solid #e6e6e6;"></div>
<div class="t" style="left:642.40px;top:575.05px;font-size:11px;color:#111;transform:scaleX(1.0185);transform-origin:0 0;">Default</div>
<svg class="a" style="left:1207px;top:577px;" width="10" height="6" viewBox="0 0 10 6"><path d="M1 1L5 5L9 1" fill="none" stroke="#333" stroke-width="1.1"/></svg>
<div class="t" style="left:60.00px;top:573.75px;font-size:11px;color:#333;transform:scaleX(0.9969);transform-origin:0 0;">Global data stores</div>
<svg class="a" style="left:37px;top:570px;" width="18" height="19" viewBox="0 0 18 19"><rect x="3.5" y="3.3" width="11" height="11" fill="#fafafa" stroke="#111" stroke-width="1.2"/><path d="M5 11.8H13" stroke="#333" stroke-width="0.8"/></svg>
<div class="a" style="left:18px;top:589px;width:1225px;height:19.5px;background:#fdfde6;border:1px solid #dedede;border-right:none;"></div>
<svg class="a" style="left:6px;top:594px;" width="10" height="7" viewBox="0 0 10 7"><path d="M1 1.2L4.8 5L8.6 1.2" fill="none" stroke="#222" stroke-width="1.4"/></svg>
<div class="t" style="left:22.40px;top:592.55px;font-size:11px;color:#333;transform:scaleX(1.0025);transform-origin:0 0;">Parameters</div>
<div class="a" style="left:34px;top:608px;width:603.5px;height:19.5px;background:#f7f7f7;border:1px solid #dedede;border-right:none;"></div>
<div class="a" style="left:637px;top:608px;width:2px;height:19px;background:#e2e2e2;"></div>
<div class="a" style="left:639px;top:609px;width:581px;height:18px;background:#fdfdfd;"></div>
<div class="a" style="left:639px;top:625.5px;width:581px;height:1.5px;background:#cacaca;"></div>
<div class="a" style="left:1220px;top:608px;width:23px;height:19.5px;background:#f6f6f6;border:none;border-bottom:1px solid #e2e2e2;border-left:1px solid #e6e6e6;"></div>
<div class="t" style="left:642.40px;top:613.05px;font-size:11px;color:#111;transform:scaleX(1.0185);transform-origin:0 0;">Default</div>
<svg class="a" style="left:1207px;top:615px;" width="10" height="6" viewBox="0 0 10 6"><path d="M1 1L5 5L9 1" fill="none" stroke="#333" stroke-width="1.1"/></svg>
<div class="t" style="left:60.00px;top:611.75px;font-size:11px;color:#333;transform:scaleX(0.9987);transform-origin:0 0;">Model parameter arguments</div>
<svg class="a" style="left:37px;top:609px;" width="18" height="17" viewBox="0 0 18 17"><defs><linearGradient id="yg8" x1="0" y1="0" x2="0" y2="1"><stop offset="0" stop-color="#fffdf0"/><stop offset="1" stop-color="#f5e3a0"/></linearGradient></defs><rect x="1.5" y="0.5" width="14" height="14" fill="url(#yg8)"/><path d="M4 0.5H1.5V14.5H4M13 0.5H15.5V14.5H13" fill="none" stroke="#4f76b0" stroke-width="1"/><text x="8.5" y="5.6" font-family="Liberation Mono" font-weight="bold" font-size="5.2" text-anchor="middle" fill="#2f62aa">101</text><path d="M1.5 9.5L4 11.5L1.5 13.5" fill="none" stroke="#222" stroke-width="0.9"/><rect x="6.5" y="8.5" width="8" height="7" rx="0.8" fill="#f2f2f2" stroke="#111" stroke-width="1.3"/><path d="M14.8 10.8L16.4 12L14.8 13.2Z" fill="#111"/></svg>
<div class="a" style="left:34px;top:627px;width:603.5px;height:19.5px;background:#f7f7f7;border:1px solid #dedede;border-right:none;"></div>
<div class="a" style="left:637px;top:627px;width:2px;height:19px;background:#e2e2e2;"></div>
<div class="a" style="left:639px;top:628px;width:581px;height:18px;background:#fdfdfd;"></div>
<div class="a" style="left:639px;top:644.5px;width:581px;height:1.5px;background:#cacaca;"></div>
<div class="a" style="left:1220px;top:627px;width:23px;height:19.5px;background:#f6f6f6;border:none;border-bottom:1px solid #e2e2e2;border-left:1px solid #e6e6e6;"></div>
<div class="t" style="left:642.40px;top:632.05px;font-size:11px;color:#111;transform:scaleX(1.0185);transform-origin:0 0;">Default</div>
<svg class="a" style="left:1207px;top:634px;" width="10" height="6" viewBox="0 0 10 6"><path d="M1 1L5 5L9 1" fill="none" stroke="#333" stroke-width="1.1"/></svg>
<div class="t" style="left:60.00px;top:630.75px;font-size:11px;color:#333;transform:scaleX(0.9926);transform-origin:0 0;">Model parameters</div>
<div class="t" style="left:536.20px;top:631.85px;font-size:11px;color:#1c1c96;transform:scaleX(1.0131);transform-origin:0 0;">&#x27;Auto&#x27; will be tunable</div>
<svg class="a" style="left:37px;top:628px;" width="18" height="17" viewBox="0 0 18 17"><defs><linearGradient id="yg9" x1="0" y1="0" x2="0" y2="1"><stop offset="0" stop-color="#fffdf0"/><stop offset="1" stop-color="#f5e3a0"/></linearGradient></defs><rect x="1.5" y="0.5" width="14" height="14" fill="url(#yg9)"/><path d="M4 0.5H1.5V14.5H4M13 0.5H15.5V14.5H13" fill="none" stroke="#4f76b0" stroke-width="1"/><text x="8.5" y="5.6" font-family="Liberation Mono" font-weight="bold" font-size="5.2" text-anchor="middle" fill="#2f62aa">101</text><path d="M1.5 9.5L4 11.5L1.5 13.5" fill="none" stroke="#222" stroke-width="0.9"/><rect x="6.5" y="8.5" width="8" height="7" rx="0.8" fill="#f2f2f2" stroke="#111" stroke-width="1.3"/><path d="M14.8 10.8L16.4 12L14.8 13.2Z" fill="#111"/></svg>
<div class="a" style="left:34px;top:646px;width:603.5px;height:19.5px;background:#f7f7f7;border:1px solid #dedede;border-right:none;"></div>
<div class="a" style="left:637px;top:646px;width:2px;height:19px;background:#e2e2e2;"></div>
<div class="a" style="left:639px;top:647px;width:581px;height:18px;background:#fdfdfd;"></div>
<div class="a" style="left:639px;top:663.5px;width:581px;height:1.5px;background:#cacaca;"></div>
<div class="a" style="left:1220px;top:646px;width:23px;height:19.5px;background:#f6f6f6;border:none;border-bottom:1px solid #e2e2e2;border-left:1px solid #e6e6e6;"></div>
<div class="t" style="left:642.40px;top:651.05px;font-size:11px;color:#111;transform:scaleX(1.0185);transform-origin:0 0;">Default</div>
<svg class="a" style="left:1207px;top:653px;" width="10" height="6" viewBox="0 0 10 6"><path d="M1 1L5 5L9 1" fill="none" stroke="#333" stroke-width="1.1"/></svg>
<div class="t" style="left:60.00px;top:649.75px;font-size:11px;color:#333;transform:scaleX(0.9995);transform-origin:0 0;">External parameters</div>
<div class="t" style="left:536.20px;top:650.85px;font-size:11px;color:#1c1c96;transform:scaleX(1.0131);transform-origin:0 0;">&#x27;Auto&#x27; will be tunable</div>
<svg class="a" style="left:37px;top:647px;" width="18" height="17" viewBox="0 0 18 17"><defs><linearGradient id="yg10" x1="0" y1="0" x2="0" y2="1"><stop offset="0" stop-color="#fffdf0"/><stop offset="1" stop-color="#f5e3a0"/></linearGradient></defs><rect x="1.5" y="0.5" width="14" height="14" fill="url(#yg10)"/><path d="M4 0.5H1.5V14.5H4M13 0.5H15.5V14.5H13" fill="none" stroke="#4f76b0" stroke-width="1"/><text x="8.5" y="5.6" font-family="Liberation Mono" font-weight="bold" font-size="5.2" text-anchor="middle" fill="#2f62aa">101</text><text x="8.5" y="12.6" font-family="Liberation Mono" font-weight="bold" font-size="5.2" text-anchor="middle" fill="#2f62aa">010</text></svg>
<div class="a" style="left:34px;top:665px;width:603.5px;height:19.5px;background:#f7f7f7;border:1px solid #dedede;border-right:none;"></div>
<div class="a" style="left:637px;top:665px;width:2px;height:19px;background:#e2e2e2;"></div>
<div class="a" style="left:639px;top:666px;width:581px;height:18px;background:#fdfdfd;"></div>
<div class="a" style="left:639px;top:682.5px;width:581px;height:1.5px;background:#cacaca;"></div>
<div class="a" style="left:1220px;top:665px;width:23px;height:19.5px;background:#f6f6f6;border:none;border-bottom:1px solid #e2e2e2;border-left:1px solid #e6e6e6;"></div>
<div class="t" style="left:642.40px;top:670.05px;font-size:11px;color:#111;transform:scaleX(1.0185);transform-origin:0 0;">Default</div>
<svg class="a" style="left:1207px;top:672px;" width="10" height="6" viewBox="0 0 10 6"><path d="M1 1L5 5L9 1" fill="none" stroke="#333" stroke-width="1.1"/></svg>
<div class="t" style="left:60.00px;top:668.75px;font-size:11px;color:#333;transform:scaleX(0.9893);transform-origin:0 0;">Constants</div>
<svg class="a" style="left:37px;top:665px;" width="18" height="19" viewBox="0 0 18 19"><rect x="1.5" y="2" width="15" height="14.5" fill="#fafafa" stroke="#222" stroke-width="1"/><path d="M1.8 2.5V8M1.8 16.3H16.3" stroke="#fff" stroke-width="1.1" stroke-dasharray="1 1"/><path d="M2 9.3H16" stroke="#2a72c0" stroke-width="1.4"/></svg>
<div class="a" style="left:5px;top:684px;width:1238px;height:7px;background:#ffffff;"></div>
<div class="a" style="left:2px;top:348px;width:1246px;height:346px;background:none;border:3px solid #ea3f3f;box-shadow:inset 2px 3px 4px rgba(0,0,0,0.4), 2px 2px 4px rgba(0,0,0,0.4);"></div>
<div class="a" style="left:0px;top:701px;width:1280px;height:50px;background:#f0f0f0;"></div>
<div class="a" style="left:2px;top:699.5px;width:214px;height:31.5px;background:#ffffff;border:3px solid #ea3f3f;box-shadow:inset 0 7px 4px -2px rgba(0,0,0,0.3), 1px 2px 3px rgba(0,0,0,0.35);"></div>
<div class="t" style="left:12.50px;top:713.05px;font-size:11px;color:#111;transform:scaleX(0.9870);transform-origin:0 0;">Code Mappings - Component Interface</div>
<div class="t" style="left:6.30px;top:735.64px;font-size:12.3px;color:#222;transform:scaleX(0.8494);transform-origin:0 0;">Ready</div>
<div class="t" style="left:640.80px;top:736.00px;font-size:12px;color:#1a1a8c;transform:scaleX(0.9836);transform-origin:0 0;">View diagnostics</div>
<div class="t" style="left:889.80px;top:736.00px;font-size:12px;color:#222;transform:scaleX(0.8910);transform-origin:0 0;">63%</div>
<div class="t" style="left:1196.80px;top:736.00px;font-size:12px;color:#1a1a8c;transform:scaleX(0.9680);transform-origin:0 0;">FixedStepAuto</div>
<div class="a" style="left:637px;top:748px;width:2px;height:3px;background:#111;"></div>
</body></html>
